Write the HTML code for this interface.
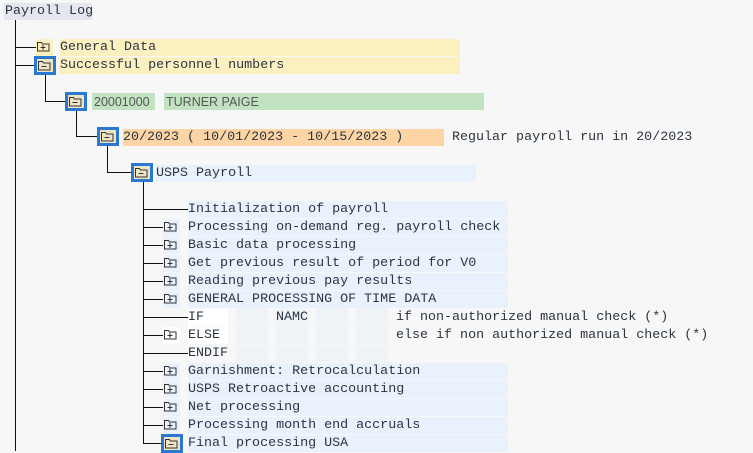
<!DOCTYPE html>
<html><head><style>
body{margin:0;width:753px;height:451px;background:#f7f7f7;position:relative;overflow:hidden;font-family:"Liberation Mono",monospace;font-size:13.35px;color:#2b3540}
div{position:absolute;box-sizing:border-box}
.t{height:17px;line-height:18px;white-space:pre}
.v{background:#111;width:1px}
.h{background:#111;height:1px}
.bx{border:3px solid #2b78d0;background:#efe4c6}
.ic{width:17px;height:17px}
.s{font-family:"Liberation Sans",sans-serif;font-size:12.5px;color:#555}
.b{background:#e9f2fc}
.c{background:#eef3f8}
</style></head><body>
<svg width="0" height="0" style="position:absolute"><defs>
<g id="fp"><path d="M1.5 3.5h4l1 1.5h6.5v7h-11.5z" fill="none" stroke="#333" stroke-width="1"/><path d="M4.5 8.5h5M7 6v5" stroke="#333"/></g>
<g id="fm"><path d="M1.5 2.5h4l1 1.5h6.5v7h-11.5z" fill="none" stroke="#333" stroke-width="1"/><path d="M4.5 7.5h5" stroke="#333"/></g>
</defs></svg>

<div class="t" style="left:4px;top:3px;width:88px;background:#e4e8ee;padding-left:1px">Payroll Log</div>
<div class="v" style="left:15px;top:20px;height:431px"></div>

<div class="h" style="left:15px;top:47px;width:22px"></div>
<div class="ic" style="left:36px;top:39px;background:#fdf0c0"><svg width="17" height="17"><use href="#fp"/></svg></div>
<div class="t" style="left:60px;top:39px;width:400px;background:#fdf0c0">General Data</div>

<div class="h" style="left:15px;top:65px;width:20px"></div>
<div class="bx" style="left:34px;top:56px;width:22px;height:19px"><svg width="16" height="13" style="position:absolute;left:0;top:0"><use href="#fm"/></svg></div>
<div class="t" style="left:60px;top:57px;width:400px;background:#fdf0c0">Successful personnel numbers</div>

<div class="v" style="left:45px;top:75px;height:27px"></div>
<div class="h" style="left:45px;top:101px;width:21px"></div>
<div class="bx" style="left:65px;top:92px;width:22px;height:19px"><svg width="16" height="13" style="position:absolute;left:0;top:0"><use href="#fm"/></svg></div>
<div class="t s" style="left:92px;top:93px;width:63px;background:#c2e3c2;padding-left:2px">20001000</div>
<div class="t s" style="left:164px;top:93px;width:320px;background:#c2e3c2;padding-left:2px">TURNER PAIGE</div>

<div class="v" style="left:76px;top:111px;height:26px"></div>
<div class="h" style="left:76px;top:136px;width:21px"></div>
<div class="bx" style="left:97px;top:127px;width:22px;height:19px"><svg width="16" height="13" style="position:absolute;left:0;top:0"><use href="#fm"/></svg></div>
<div class="t" style="left:123px;top:129px;width:321px;background:#fdd5a5">20/2023 ( 10/01/2023 - 10/15/2023 )</div>
<div class="t" style="left:452px;top:129px">Regular payroll run in 20/2023</div>

<div class="v" style="left:107px;top:146px;height:27px"></div>
<div class="h" style="left:107px;top:172px;width:24px"></div>
<div class="bx" style="left:131px;top:163px;width:22px;height:19px"><svg width="16" height="13" style="position:absolute;left:0;top:0"><use href="#fm"/></svg></div>
<div class="t b" style="left:156px;top:165px;width:320px">USPS Payroll</div>

<div class="v" style="left:143px;top:182px;height:262px"></div>

<div class="h" style="left:143px;top:209px;width:45px"></div>
<div class="t b" style="left:188px;top:201px;width:320px">Initialization of payroll</div>

<div class="h" style="left:143px;top:227px;width:20px"></div><div class="ic b" style="left:163px;top:219px"><svg width="17" height="17"><use href="#fp"/></svg></div>
<div class="t b" style="left:188px;top:219px;width:320px">Processing on-demand reg. payroll check</div>

<div class="h" style="left:143px;top:245px;width:20px"></div><div class="ic b" style="left:163px;top:237px"><svg width="17" height="17"><use href="#fp"/></svg></div>
<div class="t b" style="left:188px;top:237px;width:320px">Basic data processing</div>

<div class="h" style="left:143px;top:263px;width:20px"></div><div class="ic b" style="left:163px;top:255px"><svg width="17" height="17"><use href="#fp"/></svg></div>
<div class="t b" style="left:188px;top:255px;width:320px">Get previous result of period for V0</div>

<div class="h" style="left:143px;top:281px;width:20px"></div><div class="ic b" style="left:163px;top:273px"><svg width="17" height="17"><use href="#fp"/></svg></div>
<div class="t b" style="left:188px;top:273px;width:320px">Reading previous pay results</div>

<div class="h" style="left:143px;top:299px;width:20px"></div><div class="ic b" style="left:163px;top:291px"><svg width="17" height="17"><use href="#fp"/></svg></div>
<div class="t b" style="left:188px;top:291px;width:320px">GENERAL PROCESSING OF TIME DATA</div>

<div class="h" style="left:143px;top:317px;width:45px"></div>
<div class="t" style="left:188px;top:309px;width:40px;background:#fff">IF</div>
<div class="c" style="left:236px;top:309px;width:32px;height:17px"></div>
<div class="t c" style="left:276px;top:309px;width:32px">NAMC</div>
<div class="c" style="left:316px;top:309px;width:32px;height:17px"></div>
<div class="c" style="left:356px;top:309px;width:32px;height:17px"></div>
<div class="t" style="left:396px;top:309px">if non-authorized manual check (*)</div>

<div class="h" style="left:143px;top:335px;width:20px"></div><div class="ic" style="left:163px;top:327px;background:#fff"><svg width="17" height="17"><use href="#fp"/></svg></div>
<div class="t" style="left:188px;top:327px;width:40px;background:#fff">ELSE</div>
<div class="c" style="left:236px;top:327px;width:32px;height:17px"></div>
<div class="c" style="left:276px;top:327px;width:32px;height:17px"></div>
<div class="c" style="left:316px;top:327px;width:32px;height:17px"></div>
<div class="c" style="left:356px;top:327px;width:32px;height:17px"></div>
<div class="t" style="left:396px;top:327px">else if non authorized manual check (*)</div>

<div class="h" style="left:143px;top:353px;width:45px"></div>
<div class="t" style="left:188px;top:345px;width:40px">ENDIF</div>
<div class="c" style="left:236px;top:345px;width:32px;height:17px"></div>
<div class="c" style="left:276px;top:345px;width:32px;height:17px"></div>
<div class="c" style="left:316px;top:345px;width:32px;height:17px"></div>
<div class="c" style="left:356px;top:345px;width:32px;height:17px"></div>

<div class="h" style="left:143px;top:371px;width:20px"></div><div class="ic b" style="left:163px;top:363px"><svg width="17" height="17"><use href="#fp"/></svg></div>
<div class="t b" style="left:188px;top:363px;width:320px">Garnishment: Retrocalculation</div>

<div class="h" style="left:143px;top:389px;width:20px"></div><div class="ic b" style="left:163px;top:381px"><svg width="17" height="17"><use href="#fp"/></svg></div>
<div class="t b" style="left:188px;top:381px;width:320px">USPS Retroactive accounting</div>

<div class="h" style="left:143px;top:407px;width:20px"></div><div class="ic b" style="left:163px;top:399px"><svg width="17" height="17"><use href="#fp"/></svg></div>
<div class="t b" style="left:188px;top:399px;width:320px">Net processing</div>

<div class="h" style="left:143px;top:425px;width:20px"></div><div class="ic b" style="left:163px;top:417px"><svg width="17" height="17"><use href="#fp"/></svg></div>
<div class="t b" style="left:188px;top:417px;width:320px">Processing month end accruals</div>

<div class="h" style="left:143px;top:443px;width:18px"></div>
<div class="bx" style="left:161px;top:434px;width:22px;height:19px"><svg width="16" height="13" style="position:absolute;left:0;top:0"><use href="#fm"/></svg></div>
<div class="t b" style="left:188px;top:435px;width:320px">Final processing USA</div>
</body></html>
